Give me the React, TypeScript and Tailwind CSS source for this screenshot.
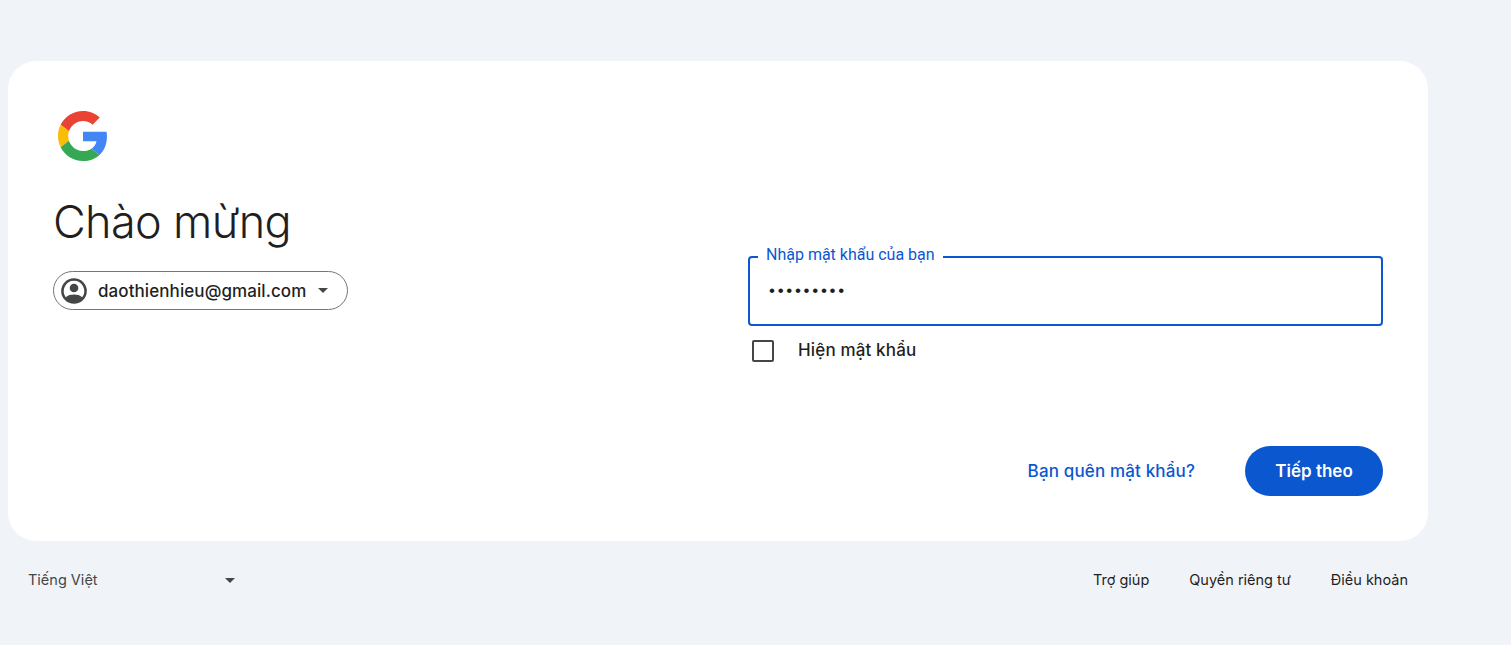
import React from 'react'

const GoogleLogo = () => (
  <svg viewBox="0 0 48 48" className="h-[50px] w-[50px]">
    <path fill="#EA4335" d="M24 9.5c3.54 0 6.71 1.22 9.21 3.6l6.85-6.85C35.9 2.38 30.47 0 24 0 14.62 0 6.51 5.38 2.56 13.22l7.98 6.19C12.43 13.72 17.74 9.5 24 9.5z" />
    <path fill="#4285F4" d="M46.98 24.55c0-1.57-.15-3.09-.38-4.55H24v9.02h12.94c-.58 2.96-2.26 5.48-4.78 7.18l7.73 6c4.51-4.18 7.09-10.36 7.09-17.65z" />
    <path fill="#FBBC05" d="M10.53 28.59c-.48-1.45-.76-2.99-.76-4.59s.27-3.14.76-4.59l-7.98-6.19C.92 16.46 0 20.12 0 24c0 3.88.92 7.54 2.56 10.78l7.97-6.19z" />
    <path fill="#34A853" d="M24 48c6.48 0 11.93-2.13 15.89-5.81l-7.73-6c-2.15 1.45-4.92 2.3-8.16 2.3-6.26 0-11.57-4.22-13.47-9.91l-7.98 6.19C6.51 42.62 14.62 48 24 48z" />
  </svg>
)

const AccountIcon = () => (
  <svg viewBox="0 0 24 24" className="h-[28px] w-[28px]" fill="#444746">
    <path d="M12 1a11 11 0 1 0 0 22 11 11 0 0 0 0-22zm0 2.2a8.8 8.8 0 0 1 7 14.1C17.2 15.6 14.8 15 12 15s-5.2.6-7 2.3A8.8 8.8 0 0 1 12 3.2z" />
    <circle cx="12" cy="9.4" r="3.7" />
  </svg>
)

const Caret = () => <div className="h-0 w-0 border-x-[5px] border-t-[5px] border-x-transparent border-t-[#444746]" />

const App = () => {
  return (
    <div className="h-[645px] w-full overflow-hidden bg-[#f0f4f9] pl-2 pt-[61px] font-['Inter',sans-serif] text-[#1f1f1f]">
      <div className="flex h-[480px] w-[1420px] rounded-[28px] bg-white px-[45px] pb-[45px] pt-[50px]">
        <div className="w-[695px]">
          <div className="pl-[5px]"><GoogleLogo /></div>
          <h1 className="mt-[35px] text-[45px] font-light leading-[52px] tracking-[-0.65px]">Chào mừng</h1>
          <div className="mt-[23px] flex h-[39px] w-[295px] items-center rounded-full border border-[#747775] pl-[6px]">
            <AccountIcon />
            <span className="ml-[10px] text-[17px] font-medium leading-[36px] tracking-[0.08px]">daothienhieu@gmail.com</span>
            <div className="ml-3"><Caret /></div>
          </div>
        </div>
        <div className="flex w-[635px] flex-col pt-[145px]">
          <div className="relative flex h-[70px] items-center rounded-[4px] border-2 border-[#0b57d0] pl-[19px] font-['Liberation_Sans',sans-serif] text-[#1f1f1f]">
            <span className="text-[17px] tracking-[2.7px]">•••••••••</span>
            <span className="absolute left-[8px] top-[-15px] bg-white px-2 font-['Roboto',sans-serif] text-[16px] leading-[24px] text-[#0b57d0]">Nhập mật khẩu của bạn</span>
          </div>
          <div className="mt-[12px] flex items-center pl-[4px]">
            <div className="h-[22px] w-[22px] rounded-[2px] border-2 border-[#444746]" />
            <span className="ml-[24px] text-[17px] font-medium tracking-[0.15px]">Hiện mật khẩu</span>
          </div>
          <div className="mt-auto flex items-center justify-end">
            <a className="pt-px text-[17px] font-medium tracking-[0.15px] text-[#0b57d0]">Bạn quên mật khẩu?</a>
            <button className="ml-[50px] h-[50px] w-[138px] rounded-full bg-[#0b57d0] pt-px text-[17px] font-semibold text-white">Tiếp theo</button>
          </div>
        </div>
      </div>
      <div className="flex w-[1420px] items-center justify-between px-5 pt-[28px] text-[14.5px] leading-[22px]">
        <div className="flex w-[207px] items-center justify-between">
          <span className="text-[#444746]">Tiếng Việt</span>
          <Caret />
        </div>
        <div className="flex gap-10">
          <a>Trợ giúp</a>
          <a>Quyền riêng tư</a>
          <a>Điều khoản</a>
        </div>
      </div>
    </div>
  )
}

export default App
